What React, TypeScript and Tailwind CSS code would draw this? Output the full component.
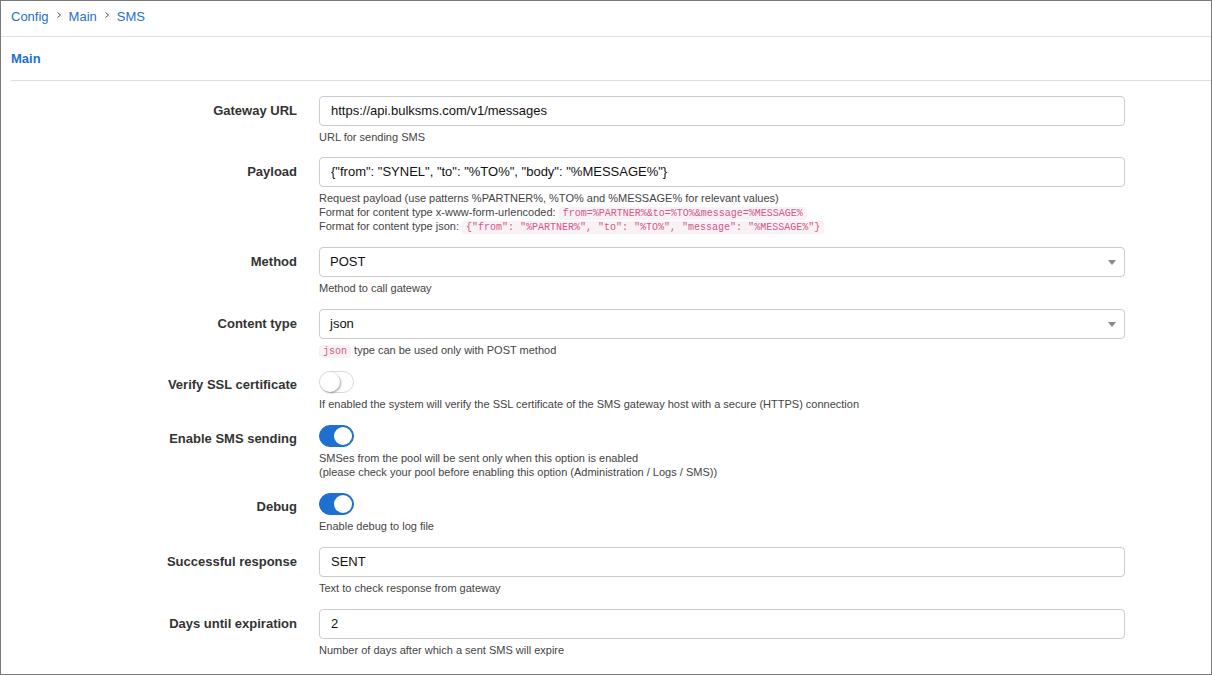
import React, { useState } from 'react';

const Code: React.FC<{ children: React.ReactNode }> = ({ children }) => (
  <code className="rounded-[3px] bg-[#f9f2f4] px-[4px] py-[1px] font-['Liberation_Mono',monospace] text-[10px] leading-none text-[#d4558a]">
    {children}
  </code>
);

const Chevron = () => (
  <svg width="8" height="8" viewBox="0 0 8 8" className="mx-[6px] mb-[3px]" fill="none" stroke="#555" strokeWidth="1">
    <path d="M2.5 1.5 L5.5 4 L2.5 6.5" />
  </svg>
);

const Toggle: React.FC<{ on: boolean }> = ({ on }) => {
  const [checked, setChecked] = useState(on);
  return (
    <button
      onClick={() => setChecked(!checked)}
      className={
        checked
          ? 'relative block h-[22px] w-[35px] rounded-full border border-[#1f6fd1] bg-[#1f6fd1]'
          : 'relative block h-[22px] w-[35px] rounded-full border border-[#d9d9d9] bg-white'
      }
    >
      <span
        className={
          checked
            ? 'absolute right-[1px] top-[1px] h-[18px] w-[18px] rounded-full bg-white'
            : 'absolute left-[0px] top-[0px] h-[20px] w-[20px] rounded-full bg-white shadow-[1px_1px_2px_rgba(0,0,0,0.35)]'
        }
      />
    </button>
  );
};

const Line: React.FC<{ children: React.ReactNode }> = ({ children }) => (
  <div className="h-[14px] whitespace-nowrap">{children}</div>
);

const Row: React.FC<{ label: string; control: React.ReactNode; help: React.ReactNode; toggle?: boolean; gap?: string }> = ({
  label,
  control,
  help,
  toggle,
  gap = 'mb-[14px]',
}) => (
  <div className={`${gap} flex`}>
    <div className={toggle ? 'mt-[3px] flex h-[22px] w-[296px] items-center justify-end' : 'flex h-[30px] w-[296px] items-center justify-end'}>
      <span className="text-[13px] font-bold text-[#333]">{label}</span>
    </div>
    <div className="ml-[22px] w-[806px]">
      {control}
      <div className="mt-[4px] text-[11px] leading-[14px] text-[#444]">{help}</div>
    </div>
  </div>
);

const Input: React.FC<{ value: string }> = ({ value }) => (
  <div className="flex h-[30px] items-center rounded-[4px] border border-[#ccc] bg-white px-[11px] text-[13px] text-[#111]">
    {value}
  </div>
);

const Select: React.FC<{ value: string }> = ({ value }) => (
  <div className="flex h-[30px] items-center justify-between rounded-[4px] border border-[#ccc] bg-white pl-[10px] pr-[8px] text-[13px] text-[#111]">
    <span>{value}</span>
    <svg width="8" height="5" viewBox="0 0 8 5">
      <path d="M0 0 L8 0 L4 5 Z" fill="#888" />
    </svg>
  </div>
);

export default function App() {
  return (
    <div className="h-[675px] w-[1212px] overflow-hidden border border-[#7a7a7a] bg-white font-['Liberation_Sans',Arial,sans-serif]">
      <div className="flex h-[36px] items-center border-b border-[#dedede] pb-[4px] pl-[10px] text-[13px] text-[#1e6fd0]">
        <span>Config</span>
        <Chevron />
        <span>Main</span>
        <Chevron />
        <span>SMS</span>
      </div>
      <div className="ml-[10px] flex h-[44px] items-center border-b border-[#dedede] pt-[1px] text-[13px] font-bold text-[#1e6fd0]">
        Main
      </div>
      <div className="pt-[15px]">
        <Row gap="mb-[13px]" label="Gateway URL" control={<Input value="https://api.bulksms.com/v1/messages" />} help="URL for sending SMS" />
        <Row
          label="Payload"
          control={<Input value={'{"from": "SYNEL", "to": "%TO%", "body": "%MESSAGE%"}'} />}
          help={
            <>
              <Line>Request payload (use patterns %PARTNER%, %TO% and %MESSAGE% for relevant values)</Line>
              <Line>
                Format for content type x-www-form-urlencoded: <Code>from=%PARTNER%&amp;to=%TO%&amp;message=%MESSAGE%</Code>
              </Line>
              <Line>
                Format for content type json: <Code>{'{"from": "%PARTNER%", "to": "%TO%", "message": "%MESSAGE%"}'}</Code>
              </Line>
            </>
          }
        />
        <Row label="Method" control={<Select value="POST" />} help="Method to call gateway" />
        <Row
          label="Content type"
          control={<Select value="json" />}
          help={
            <Line>
              <Code>json</Code> type can be used only with POST method
            </Line>
          }
        />
        <Row
          label="Verify SSL certificate"
          toggle
          control={<Toggle on={false} />}
          help="If enabled the system will verify the SSL certificate of the SMS gateway host with a secure (HTTPS) connection"
        />
        <Row
          label="Enable SMS sending"
          toggle
          control={<Toggle on={true} />}
          help={
            <>
              <Line>SMSes from the pool will be sent only when this option is enabled</Line>
              <Line>(please check your pool before enabling this option (Administration / Logs / SMS))</Line>
            </>
          }
        />
        <Row label="Debug" toggle control={<Toggle on={true} />} help="Enable debug to log file" />
        <Row label="Successful response" control={<Input value="SENT" />} help="Text to check response from gateway" />
        <Row label="Days until expiration" control={<Input value="2" />} help="Number of days after which a sent SMS will expire" />
      </div>
    </div>
  );
}
